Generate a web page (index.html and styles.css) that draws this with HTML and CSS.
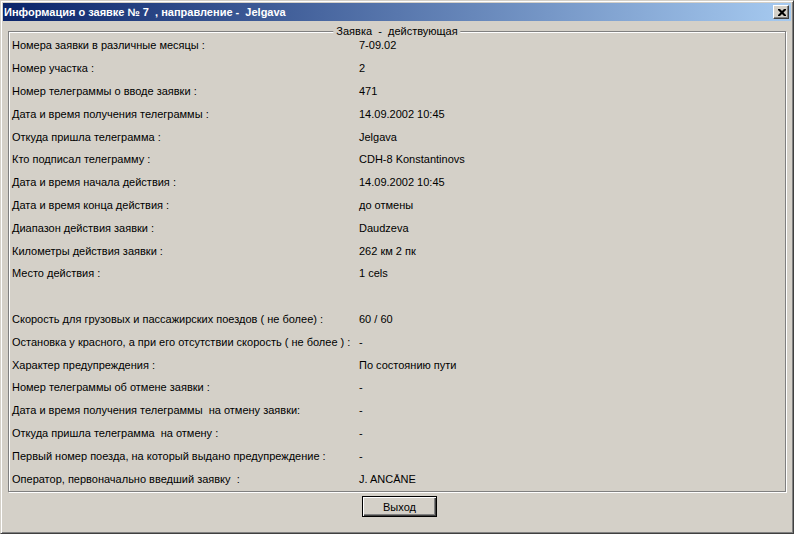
FILE: index.html
```html
<!DOCTYPE html>
<html lang="ru">
<head>
    <meta charset="UTF-8">
    <title>Информация о заявке</title>
    <link rel="stylesheet" href="styles.css">
</head>
<body>
    <div class="window">
        <!-- заголовок окна -->
        <div class="titlebar">
            <span class="title">Информация о заявке № 7  , направление -  Jelgava</span>
            <button class="close-btn" title="Закрыть">
                <svg width="8" height="7" viewBox="0 0 8 7">
                    <path d="M0 0h2l2 2 2-2h2v1l-2.5 2.5L8 6v1H6L4 5 2 7H0V6l2.5-2.5L0 1z" fill="#000"/>
                </svg>
            </button>
        </div>

        <div class="content">
            <div class="group">
                <span class="group-title">Заявка  -  действующая</span>
                <div class="rows">
                    <div class="label">Номера заявки в различные месяцы :</div><div class="value">7-09.02</div>
                    <div class="label">Номер участка :</div><div class="value">2</div>
                    <div class="label">Номер телеграммы о вводе заявки :</div><div class="value">471</div>
                    <div class="label">Дата и время получения телеграммы :</div><div class="value">14.09.2002 10:45</div>
                    <div class="label">Откуда пришла телеграмма :</div><div class="value">Jelgava</div>
                    <div class="label">Кто подписал телеграмму :</div><div class="value">CDH-8 Konstantinovs</div>
                    <div class="label">Дата и время начала действия :</div><div class="value">14.09.2002 10:45</div>
                    <div class="label">Дата и время конца действия :</div><div class="value">до отмены</div>
                    <div class="label">Диапазон действия заявки :</div><div class="value">Daudzeva</div>
                    <div class="label">Километры действия заявки :</div><div class="value">262 км 2 пк</div>
                    <div class="label">Место действия :</div><div class="value">1 cels</div>
                    <div class="label"></div><div class="value"></div>
                    <div class="label">Скорость для грузовых и пассажирских поездов ( не более) :</div><div class="value">60 / 60</div>
                    <div class="label">Остановка у красного, а при его отсутствии скорость ( не более ) :</div><div class="value">-</div>
                    <div class="label">Характер предупреждения :</div><div class="value">По состоянию пути</div>
                    <div class="label">Номер телеграммы об отмене заявки :</div><div class="value">-</div>
                    <div class="label">Дата и время получения телеграммы  на отмену заявки:</div><div class="value">-</div>
                    <div class="label">Откуда пришла телеграмма  на отмену :</div><div class="value">-</div>
                    <div class="label">Первый номер поезда, на который выдано предупреждение :</div><div class="value">-</div>
                    <div class="label">Оператор, первоначально введший заявку  :</div><div class="value">J. ANCĀNE</div>
                </div>
            </div>

            <div class="footer">
                <button class="btn default">Выход</button>
            </div>
        </div>
    </div>
</body>
</html>
```
FILE: styles.css
```css
/* базовые стили */
html, body {
    margin: 0;
    padding: 0;
}

body {
    font-family: "Liberation Sans", Arial, sans-serif;
    font-size: 11px;
    color: #000;
    background: #d4d0c8;
}

/* окно */
.window {
    box-sizing: border-box;
    width: 794px;
    height: 534px;
    padding: 2px;
    background: #d4d0c8;
    border: 1px solid;
    border-color: #d4d0c8 #404040 #404040 #d4d0c8;
    box-shadow: inset 1px 1px #fff, inset -1px -1px #808080;
    display: flex;
    flex-direction: column;
}

/* заголовок */
.titlebar {
    height: 18px;
    display: flex;
    align-items: center;
    justify-content: space-between;
    padding: 0 2px 0 1px;
    background: linear-gradient(to right, #0a246a, #a6caf0);
}

.title {
    color: #fff;
    font-weight: bold;
    font-size: 11px;
    white-space: pre;
}

.close-btn {
    box-sizing: border-box;
    width: 16px;
    height: 14px;
    padding: 0;
    border: 1px solid;
    border-color: #fff #404040 #404040 #fff;
    box-shadow: inset -1px -1px #808080;
    background: #d4d0c8;
    display: flex;
    align-items: center;
    justify-content: center;
}

.close-btn svg {
    display: block;
    margin-left: 1px;
}

/* содержимое */
.content {
    flex: 1;
    padding: 10px 5px 0 5px;
    display: flex;
    flex-direction: column;
}

/* рамка группы */
.group {
    position: relative;
    box-sizing: border-box;
    height: 461px;
    border: 1px solid #808080;
    box-shadow: inset 1px 1px #fff, 1px 1px #fff;
    padding: 2px 3px 0 3px;
}

.group-title {
    position: absolute;
    top: -7px;
    left: 50%;
    transform: translateX(-50%);
    padding: 0 3px;
    line-height: 13px;
    background: #d4d0c8;
    white-space: pre;
}

.rows {
    display: grid;
    grid-template-columns: 347px 1fr;
    grid-auto-rows: 22.8px;
}

.label,
.value {
    display: flex;
    align-items: center;
    white-space: pre;
}

/* кнопка */
.footer {
    display: flex;
    justify-content: center;
    padding: 4px 0 0 5px;
}

.btn {
    box-sizing: border-box;
    width: 75px;
    height: 21px;
    font-family: "Liberation Sans", Arial, sans-serif;
    font-size: 11px;
    color: #000;
    background: #d4d0c8;
    border: 1px solid #000;
    box-shadow: inset 1px 1px #fff, inset -1px -1px #404040, inset -2px -2px #808080;
    padding: 0;
}
```
